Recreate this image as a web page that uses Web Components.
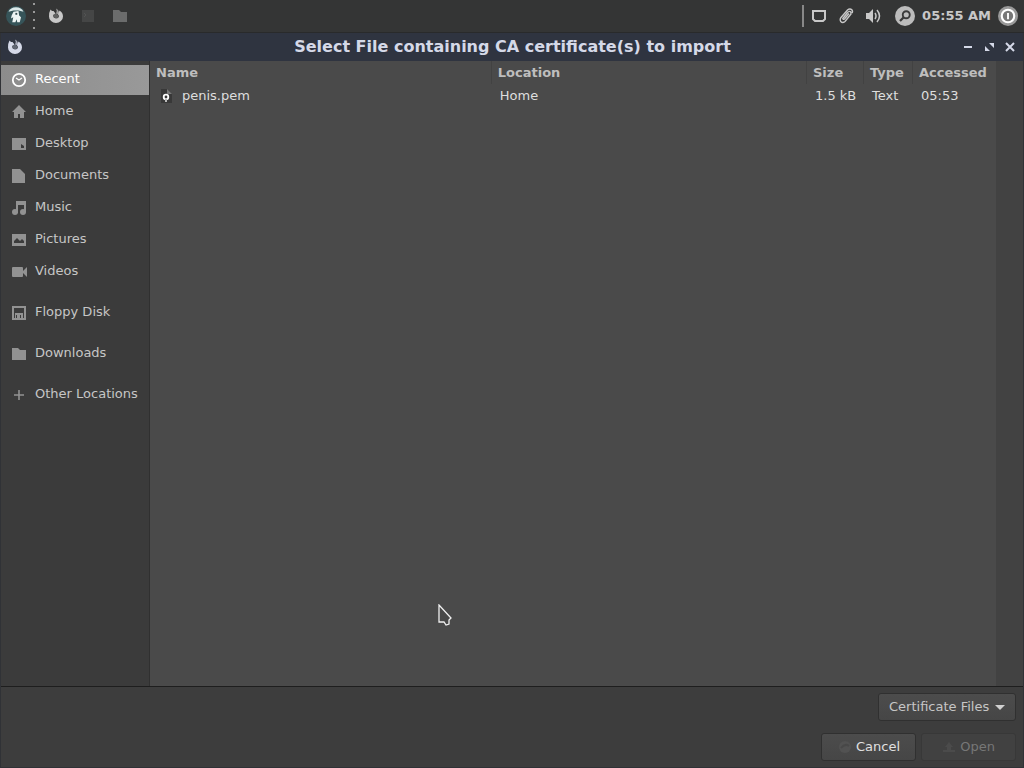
<!DOCTYPE html>
<html lang="en">
<head>
<meta charset="utf-8">
<title>Select File</title>
<style>
    body {
        margin: 0;
        background: #3c3c3c;
        color: #d0d0d0;
        font: 13px/20px "DejaVu Sans", sans-serif;
    }
</style>
</head>
<body>
<file-dialog></file-dialog>

<script>
const ICONS = {
    logo: `<circle cx="8" cy="8" r="8" fill="#365459"/><path d="M2 4.500Q3.500 1.200 8 1Q12.500 1.200 14 4.500L10 3.500H6Z" fill="#dce8e8"/><path d="M6 4.500L10 4L10.500 7.500L12 9L11 13H9L8.500 10.500L7.500 13H5L5.800 9L4 10L4.500 7.500Z" fill="#eef4f4"/><path d="M7.500 5.500h1.500v1.500H7.500z" fill="#31494d"/>`,
    firefox: `<path d="M2.500 1.500L4 3L5.500 3L7.500 5.500L5 7Q5 10 8 10.500Q11 10.500 11 7.500L10 6.500L11.500 2.500Q15 4.500 15 8.500A7 6.500 0 0 1 1 8.500Q1 4 2.500 1.500Z" fill="currentColor"/><path d="M8 .5Q11.500 2 11 6.500L8 5.500Q9.500 3 8 .5Z" fill="currentColor" opacity=".7"/><path d="M5 7L8 5.500L11 7.500Q10 10 8 10.500Q5.500 10 5 7Z" fill="currentColor" opacity=".3"/>`,
    terminal: `<path d="M2 2h12v12H2z" fill="#454646"/><path d="M4 5l2 2-2 2" fill="none" stroke="#525353"/>`,
    folder: `<path d="M1 2h6l2 2h6v10H1z" fill="currentColor"/>`,
    screen: `<path d="M2 3h12v8l-2 2H4l-2-2z" fill="none" stroke="currentColor" stroke-width="2"/>`,
    clip: `<path d="M11 5.500L6.500 11Q5 12 4.800 10.500L9.500 4.500Q11.500 2.500 12.800 4L13 6L7 13.500Q4.500 15.500 2.800 13.500Q1.500 11.500 3 9.500L9.500 2Q12-.2 14 2Q15 3.500 14 5" fill="none" stroke="currentColor" stroke-width="1.4"/>`,
    sound: `<path d="M1 5h3l4-4v14l-4-4H1z" fill="currentColor"/><path d="M10 5q2 3 0 6M12 2q5 6 0 12" fill="none" stroke="currentColor" stroke-width="1.5"/>`,
    search: `<circle cx="8" cy="8" r="8" fill="#bcbcbc"/><circle cx="9" cy="7" r="2.8" fill="none" stroke="#3a3a3a" stroke-width="1.5"/><path d="M7 9l-3 3" stroke="#3a3a3a" stroke-width="1.8"/>`,
    power: `<circle cx="8" cy="8" r="8" fill="#999"/><circle cx="8" cy="8" r="5" fill="#777" stroke="#fff" stroke-width="1.7"/><path d="M8 5.5v5" stroke="#fff" stroke-width="1.5"/>`,
    minimize: `<path d="M4 8h8" stroke="currentColor" stroke-width="2"/>`,
    restore: `<path d="M8 4h5v5zM4 7v5h5z" fill="currentColor"/>`,
    close: `<path d="M4 4l8 8m0-8l-8 8" stroke="currentColor" stroke-width="2"/>`,
    recent: `<circle cx="8" cy="8" r="6.200" fill="none" stroke="currentColor" stroke-width="1.8"/><path d="M5 6l3 2 3-2" fill="none" stroke="currentColor" stroke-width="1.3"/>`,
    home: `<path d="M8 1l7 7h-2v6H9v-4H7v4H3V8H1z" fill="currentColor"/>`,
    desktop: `<path fill-rule="evenodd" d="M1 2h14v12H1zM10 8v4h3v-2z" fill="currentColor"/>`,
    document: `<path d="M1 1h8l5 5v9H1z" fill="currentColor"/>`,
    music: `<path d="M5 1h10v11h-2V5H7v8H5z" fill="currentColor"/><circle cx="4" cy="12" r="3" fill="currentColor"/><circle cx="12" cy="12" r="3" fill="currentColor"/>`,
    picture: `<path fill-rule="evenodd" d="M1 2h14v12H1zM3 11h10V9l-2-2-2 2-3-3-3 3z" fill="currentColor"/>`,
    video: `<rect x="1" y="3" width="11" height="10" rx="1" fill="currentColor"/><path d="M12 7l4-4v10l-4-4z" fill="currentColor"/>`,
    floppy: `<path d="M2 2h12v12H2z" fill="none" stroke="currentColor" stroke-width="2"/><path fill-rule="evenodd" d="M4 8h8v6H4zM9 10v3h1v-3z" fill="currentColor"/><path d="M5 10h1v3H5z" fill="#3b3b3b"/>`,
    plus: `<path d="M8 3v10M3 8h10" stroke="currentColor" stroke-width="1.6"/>`,
    certificate: `<path d="M3 1h6l5 5v9H3z" fill="#383838"/><path d="M9 1l5 5H9z" fill="#777"/><circle cx="8" cy="9" r="2.300" fill="#383838" stroke="#fff" stroke-width="1.800"/><path d="M7 11h2v3H7z" fill="#bbb"/>`,
    cancel: `<circle cx="8" cy="8" r="6" fill="#525252"/><path d="M4 9q4-5 8-2" fill="none" stroke="#484848" stroke-width="2"/>`,
    open: `<path d="M8 3l4 5h-2v3h4v2H2v-2h4V8H4z" fill="#4b4b4b"/>`,
    pointer: `<path d="M1 1v17h5l2 3 3-1v-4l2-2z" fill="#484848" stroke="#f0f0f0" stroke-width="1.300"/>`
};

const BUTTON_CSS = `
    button { font: inherit; color: inherit; border: 0; padding: 0; background: none; }
`;

class SvgIcon extends HTMLElement {
    constructor() {
        super();
        this.attachShadow({ mode: 'open' });
    }

    connectedCallback() {
        const name = this.getAttribute('name');
        const box = name === 'pointer' ? '0 0 16 22' : '0 0 16 16';
        this.shadowRoot.innerHTML = `
            <style>
                :host { display: block; width: 16px; height: 16px; flex: none; }
                svg { display: block; width: 100%; height: 100%; }
            </style>
            <svg viewBox="${box}" aria-hidden="true">${ICONS[name]}</svg>
        `;
    }
}

class DesktopPanel extends HTMLElement {
    constructor() {
        super();
        this.attachShadow({ mode: 'open' });
        this.shadowRoot.innerHTML = `
            <style>
                :host {
                    display: flex;
                    align-items: center;
                    justify-content: space-between;
                    box-sizing: border-box;
                    height: 33px;
                    padding: 0 6px 1px;
                    background: #343535;
                    border-bottom: 1px solid #292a2b;
                    color: #c8c8c8;
                }
                ${BUTTON_CSS}
                div { display: flex; align-items: center; }
                .menu { gap: 7px; }
                .dots {
                    width: 2px;
                    height: 26px;
                    background: repeating-linear-gradient(#999 0 2px, transparent 2px 8px);
                }
                .launchers { gap: 16px; margin-left: 13px; }
                .folder { color: #6b6c6c; }
                .status { gap: 14px; }
                .tray { gap: 11px; }
                .line { height: 22px; border-left: 2px solid #888; margin-right: -4px; }
                .round { width: 20px; height: 20px; }
                .clock { gap: 7px; }
                time { font-weight: bold; white-space: nowrap; }
            </style>
            <div>
                <div class="menu">
                    <button aria-label="Menu"><svg-icon class="round" name="logo"></svg-icon></button>
                    <span class="dots"></span>
                </div>
                <div class="launchers">
                    <button aria-label="Browser"><svg-icon name="firefox"></svg-icon></button>
                    <button aria-label="Terminal"><svg-icon name="terminal"></svg-icon></button>
                    <button aria-label="Files" class="folder"><svg-icon name="folder"></svg-icon></button>
                </div>
            </div>
            <div class="status">
                <div class="tray">
                    <span class="line"></span>
                    <button aria-label="Display"><svg-icon name="screen"></svg-icon></button>
                    <button aria-label="Clipboard"><svg-icon name="clip"></svg-icon></button>
                    <button aria-label="Volume"><svg-icon name="sound"></svg-icon></button>
                </div>
                <div class="clock">
                    <button aria-label="Search"><svg-icon class="round" name="search"></svg-icon></button>
                    <time>05:55 AM</time>
                    <button aria-label="Power"><svg-icon class="round" name="power"></svg-icon></button>
                </div>
            </div>
        `;
    }
}

class WindowTitlebar extends HTMLElement {
    constructor() {
        super();
        this.attachShadow({ mode: 'open' });
        this.shadowRoot.innerHTML = `
            <style>
                :host {
                    display: grid;
                    grid-template-columns: 1fr auto 1fr;
                    align-items: center;
                    height: 28px;
                    padding: 0 5px 0 6px;
                    background: #2f3440;
                    color: #d5d9e8;
                }
                ${BUTTON_CSS}
                h1 { margin: 0; font-size: 16px; line-height: 20px; font-weight: bold; }
                .controls { display: flex; justify-content: flex-end; gap: 5px; }
            </style>
            <svg-icon name="firefox"></svg-icon>
            <h1><slot></slot></h1>
            <div class="controls">
                <button aria-label="Minimize"><svg-icon name="minimize"></svg-icon></button>
                <button aria-label="Restore"><svg-icon name="restore"></svg-icon></button>
                <button aria-label="Close"><svg-icon name="close"></svg-icon></button>
            </div>
        `;
    }
}

class PlaceItem extends HTMLElement {
    constructor() {
        super();
        this.attachShadow({ mode: 'open' });
    }

    connectedCallback() {
        this.shadowRoot.innerHTML = `
            <style>
                :host { display: block; color: #c6c6c6; }
                :host([apart]) { margin-top: 9px; }
                a {
                    display: flex;
                    align-items: center;
                    gap: 8px;
                    height: 30px;
                    padding-left: 10px;
                    color: inherit;
                    text-decoration: none;
                }
                svg-icon { color: #929292; }
                span { padding-bottom: 2px; white-space: nowrap; }
                :host([selected]) a { background: linear-gradient(90deg, #8c8c8c, #999); color: #fff; }
                :host([selected]) svg-icon { color: #fff; }
            </style>
            <a href="#"><svg-icon name="${this.getAttribute('icon')}"></svg-icon><span><slot></slot></span></a>
        `;
    }
}

class PlacesSidebar extends HTMLElement {
    constructor() {
        super();
        this.attachShadow({ mode: 'open' });
        this.shadowRoot.innerHTML = `
            <style>
                :host {
                    display: block;
                    width: 148px;
                    flex: none;
                    background: #3b3b3b;
                    border-right: 1px solid #303030;
                }
                nav { display: flex; flex-direction: column; gap: 2px; padding-top: 4px; }
            </style>
            <nav aria-label="Places"><slot></slot></nav>
        `;
    }
}

class FileList extends HTMLElement {
    constructor() {
        super();
        this.attachShadow({ mode: 'open' });
        this.files = [
            { name: 'penis.pem', location: 'Home', size: '1.5 kB', type: 'Text', accessed: '05:53' }
        ];
        this.shadowRoot.innerHTML = `
            <style>
                :host { display: flex; flex: 1; min-width: 0; background: #4a4a4a; }
                .view { flex: 1; min-width: 0; }
                .scrollbar { width: 27px; background: #424242; }
                table { width: 100%; table-layout: fixed; border-collapse: separate; border-spacing: 0; }
                th, td { box-sizing: border-box; text-align: left; white-space: nowrap; }
                th { height: 23px; padding: 0 0 0 6px; color: #bebebe; border-right: 1px solid #424242; }
                th:last-child { border-right: 0; }
                td { height: 24px; padding: 0 8px; color: #dedede; }
                .name { width: 40.4%; }
                .size { width: 57px; }
                .type { width: 49px; }
                .accessed { width: 83px; }
                .file { display: flex; align-items: center; gap: 8px; }
                td:nth-child(3) { text-align: right; }
                td:last-child { padding-right: 0; }
            </style>
            <div class="view">
                <table>
                    <thead>
                        <tr>
                            <th class="name">Name</th>
                            <th>Location</th>
                            <th class="size">Size</th>
                            <th class="type">Type</th>
                            <th class="accessed">Accessed</th>
                        </tr>
                    </thead>
                    <tbody></tbody>
                </table>
            </div>
            <div class="scrollbar"></div>
        `;
        this.displayFiles();
    }

    displayFiles() {
        this.shadowRoot.querySelector('tbody').innerHTML = this.files.map(file => `
            <tr>
                <td><div class="file"><svg-icon name="certificate"></svg-icon>${file.name}</div></td>
                <td>${file.location}</td>
                <td>${file.size}</td>
                <td>${file.type}</td>
                <td>${file.accessed}</td>
            </tr>
        `).join('');
    }
}

class DialogFooter extends HTMLElement {
    constructor() {
        super();
        this.attachShadow({ mode: 'open' });
        this.shadowRoot.innerHTML = `
            <style>
                :host {
                    display: flex;
                    flex-direction: column;
                    align-items: flex-end;
                    gap: 12px;
                    padding: 6px 7px;
                    background: #3d3d3d;
                    border-top: 1px solid #1e1e1e;
                }
                select, button {
                    box-sizing: border-box;
                    height: 28px;
                    margin: 0;
                    border: 1px solid #303030;
                    border-radius: 3px;
                    background: linear-gradient(#4c4c4c, #464646);
                    font: inherit;
                    color: #e0e0e0;
                }
                label { display: grid; align-items: center; }
                select, label svg { grid-area: 1 / 1; }
                select { appearance: none; width: 138px; padding: 0 10px; color: #c6c6c6; }
                label svg { justify-self: end; margin-right: 11px; pointer-events: none; }
                .actions { display: flex; gap: 5px; }
                button {
                    display: flex;
                    align-items: center;
                    justify-content: flex-end;
                    gap: 3px;
                    width: 95px;
                    padding: 0 15px;
                }
                button:disabled { background: #414141; border-color: #383838; color: #777; padding-right: 20px; }
            </style>
            <label>
                <select aria-label="File type"><option>Certificate Files</option></select>
                <svg width="10" height="5" aria-hidden="true"><path d="M0 0h10L5 5z" fill="#d0d0d0"/></svg>
            </label>
            <div class="actions">
                <button type="button"><svg-icon name="cancel"></svg-icon>Cancel</button>
                <button type="button" disabled><svg-icon name="open"></svg-icon>Open</button>
            </div>
        `;
    }
}

class FileDialog extends HTMLElement {
    constructor() {
        super();
        this.attachShadow({ mode: 'open' });
        this.shadowRoot.innerHTML = `
            <style>
                :host { display: flex; flex-direction: column; min-height: 100vh; }
                .window {
                    display: flex;
                    flex-direction: column;
                    flex: 1;
                    border: 1px solid #303236;
                    border-top: 0;
                }
                main { display: flex; flex: 1; }
                .pointer { position: absolute; left: 438px; top: 604px; width: 16px; height: 22px; }
            </style>
            <desktop-panel></desktop-panel>
            <div class="window">
                <window-titlebar>Select File containing CA certificate(s) to import</window-titlebar>
                <main>
                    <places-sidebar>
                        <place-item icon="recent" selected>Recent</place-item>
                        <place-item icon="home">Home</place-item>
                        <place-item icon="desktop">Desktop</place-item>
                        <place-item icon="document">Documents</place-item>
                        <place-item icon="music">Music</place-item>
                        <place-item icon="picture">Pictures</place-item>
                        <place-item icon="video">Videos</place-item>
                        <place-item icon="floppy" apart>Floppy Disk</place-item>
                        <place-item icon="folder" apart>Downloads</place-item>
                        <place-item icon="plus" apart>Other Locations</place-item>
                    </places-sidebar>
                    <file-list></file-list>
                </main>
                <dialog-footer></dialog-footer>
            </div>
            <svg-icon class="pointer" name="pointer"></svg-icon>
        `;
    }
}

customElements.define('svg-icon', SvgIcon);
customElements.define('desktop-panel', DesktopPanel);
customElements.define('window-titlebar', WindowTitlebar);
customElements.define('place-item', PlaceItem);
customElements.define('places-sidebar', PlacesSidebar);
customElements.define('file-list', FileList);
customElements.define('dialog-footer', DialogFooter);
customElements.define('file-dialog', FileDialog);
</script>
</body>
</html>
